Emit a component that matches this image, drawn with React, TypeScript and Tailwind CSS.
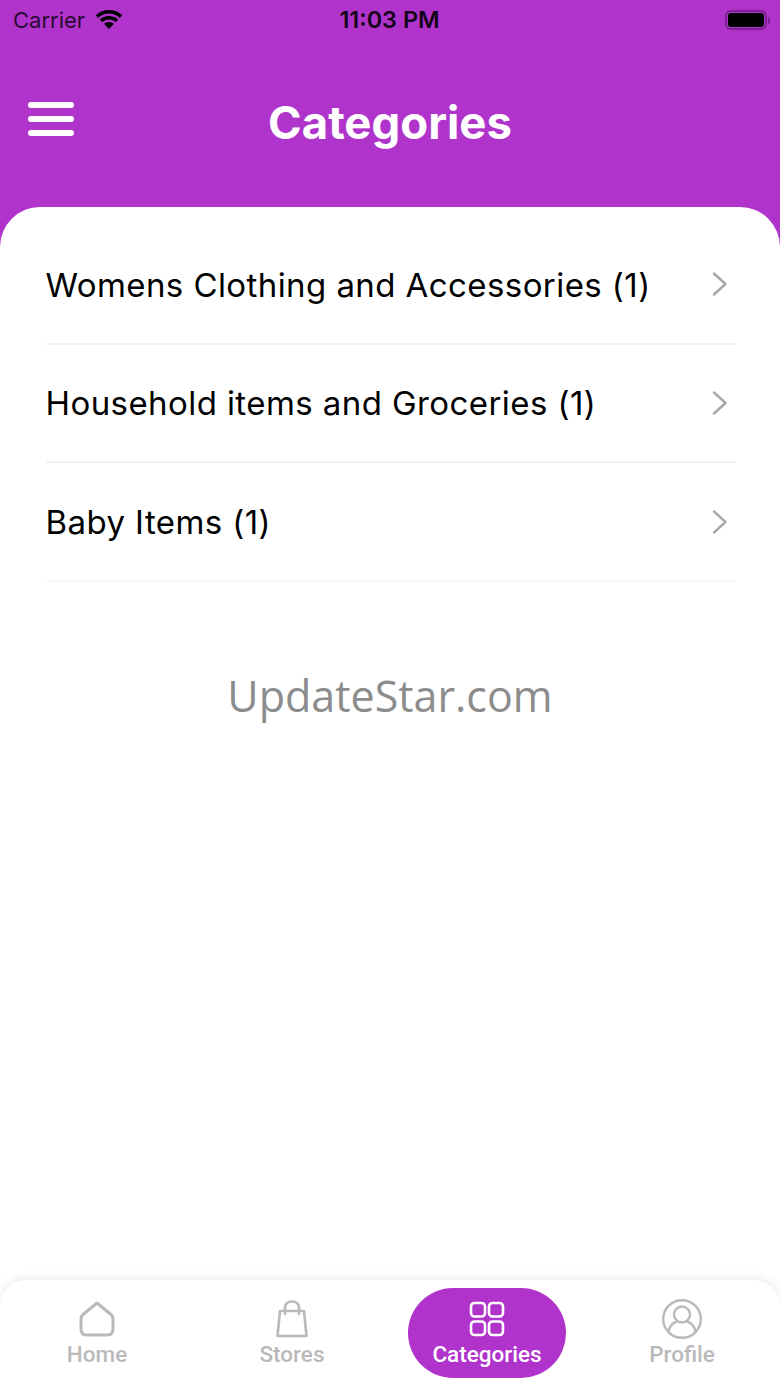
import React from "react";

function Row({ label, shade }: { label: string; shade: string }) {
  return (
    <div className={`flex h-[118.67px] items-center justify-between border-b-2 pr-[8px] pt-[2px] ${shade}`}>
      <span className="-ml-[0.5px] text-[33px] leading-none tracking-[0.42px] text-black">{label}</span>
      <svg className="-mt-[2px]" width="16" height="24" viewBox="0 0 16 24" fill="none" stroke="#a8a8a8" strokeWidth="2.4" strokeLinecap="round" strokeLinejoin="round">
        <path d="M2 1.5 L13.5 12 L2 22.5" />
      </svg>
    </div>
  );
}

function Tab({ label, icon, active }: { label: string; icon: React.ReactNode; active?: boolean }) {
  return (
    <div className={`flex h-[90px] w-[158px] flex-col items-center justify-start rounded-full pt-[10px] ${active ? "bg-[#b034cc] text-white" : "text-[#bababa]"}`}>
      <div className="flex h-[42px] items-center justify-center">{icon}</div>
      <span className="mt-[1px] text-[22.5px] font-medium leading-[26px] font-['Roboto',sans-serif]">{label}</span>
    </div>
  );
}

export default function App() {
  return (
    <div className="flex h-[1387px] w-[780px] flex-col overflow-hidden bg-[#b034cc] font-['Inter',sans-serif]">
      <div className="flex h-[207px] shrink-0 flex-col">
        <div className="flex h-[40px] items-center justify-between pl-[13px] pr-[10px] text-black">
          <div className="flex w-[196px] items-center gap-[9px]">
            <span className="text-[22px] leading-none text-[#2a0a33]">Carrier</span>
            <svg width="30" height="22" viewBox="0 0 30 22" fill="currentColor">
              <path d="M15 4.5c4.2 0 8 1.7 10.8 4.4l2.4-2.6C24.7 2.9 20.1 1 15 1S5.300 2.900 1.800 6.300l2.400 2.600C7 6.200 10.800 4.500 15 4.500z" />
              <path d="M15 10.500c2.600 0 5 1 6.800 2.700l2.400-2.600C21.800 8.300 18.600 7 15 7s-6.800 1.300-9.200 3.600l2.400 2.600C10 11.500 12.400 10.500 15 10.500z" />
              <path d="M15 13c-1.900 0-3.500.7-4.800 1.900L15 20l4.800-5.100C18.500 13.700 16.900 13 15 13z" />
            </svg>
          </div>
          <span className="text-[23.4px] font-semibold leading-none text-[#16041a]">11:03 PM</span>
          <div className="flex w-[200px] items-center justify-end gap-[1px]">
            <div className="flex h-[20px] w-[42px] items-center justify-center rounded-[6px] border-2 border-[#7b2190]">
              <div className="h-[14px] w-[36px] rounded-[3px] bg-black" />
            </div>
            <div className="h-[7px] w-[2px] rounded-r-full bg-[#7b2190]" />
          </div>
        </div>
        <div className="mt-[53px] flex h-[60px] items-center px-[28px]">
          <div className="mb-[8px] flex w-[46px] flex-col gap-[8px]">
            <div className="h-[6px] rounded-full bg-white" />
            <div className="h-[6px] rounded-full bg-white" />
            <div className="h-[6px] rounded-full bg-white" />
          </div>
          <h1 className="flex-1 text-center text-[45.5px] font-bold leading-none text-white">Categories</h1>
          <div className="w-[46px]" />
        </div>
      </div>

      <div className="flex min-h-0 flex-1 flex-col rounded-t-[40px] bg-white">
        <div className="pl-[46px] pr-[44px] pt-[19px]">
          <Row label="Womens Clothing and Accessories (1)" shade="border-[#efefef]" />
          <Row label="Household items and Groceries (1)" shade="border-[#f2f2f2]" />
          <Row label="Baby Items (1)" shade="border-[#f6f6f6]" />
        </div>
        <div className="mt-[86px] text-center font-['Open_Sans',sans-serif] text-[43px] leading-[56px] text-[#8c8c8c]">
          UpdateStar.com
        </div>
        <div className="mt-auto flex h-[107px] items-start gap-[37px] rounded-t-[26px] bg-white px-[18px] pt-[8px] shadow-[0_-3px_10px_rgba(0,0,0,0.07)]">
          <Tab
            label="Home"
            icon={
              <svg width="36" height="36" viewBox="0 0 36 36" fill="none" stroke="#bababa" strokeWidth="3" strokeLinejoin="round">
                <path d="M18 2 L32 13.500 Q34 15 34 18 V28 Q34 34 28 34 H8 Q2 34 2 28 V18 Q2 15 4 13.500 Z" />
              </svg>
            }
          />
          <Tab
            label="Stores"
            icon={
              <svg width="32" height="38" viewBox="0 0 32 38" fill="none" stroke="#bababa" strokeWidth="2.600" strokeLinejoin="round">
                <path d="M4 11 H28 L30.500 36 H1.500 Z" />
                <path d="M9 15 V8 Q9 1.500 16 1.500 Q23 1.500 23 8 V15" />
              </svg>
            }
          />
          <Tab
            active
            label="Categories"
            icon={
              <svg width="36" height="36" viewBox="0 0 36 36" fill="none" stroke="#ffffff" strokeWidth="2.600">
                <rect x="2" y="2" width="14" height="13.500" rx="3.500" />
                <rect x="20" y="2" width="14" height="13.500" rx="3.500" />
                <rect x="2" y="20.500" width="14" height="13.500" rx="3.500" />
                <rect x="20" y="20.500" width="14" height="13.500" rx="3.500" />
              </svg>
            }
          />
          <Tab
            label="Profile"
            icon={
              <svg width="40" height="40" viewBox="0 0 40 40" fill="none" stroke="#bababa" strokeWidth="2.400">
                <circle cx="20" cy="20" r="18.800" />
                <circle cx="20" cy="15.500" r="8" />
                <path d="M6.500 33 Q8 24.500 15 22.500 M33.500 33 Q32 24.500 25 22.500" />
              </svg>
            }
          />
        </div>
      </div>
    </div>
  );
}
